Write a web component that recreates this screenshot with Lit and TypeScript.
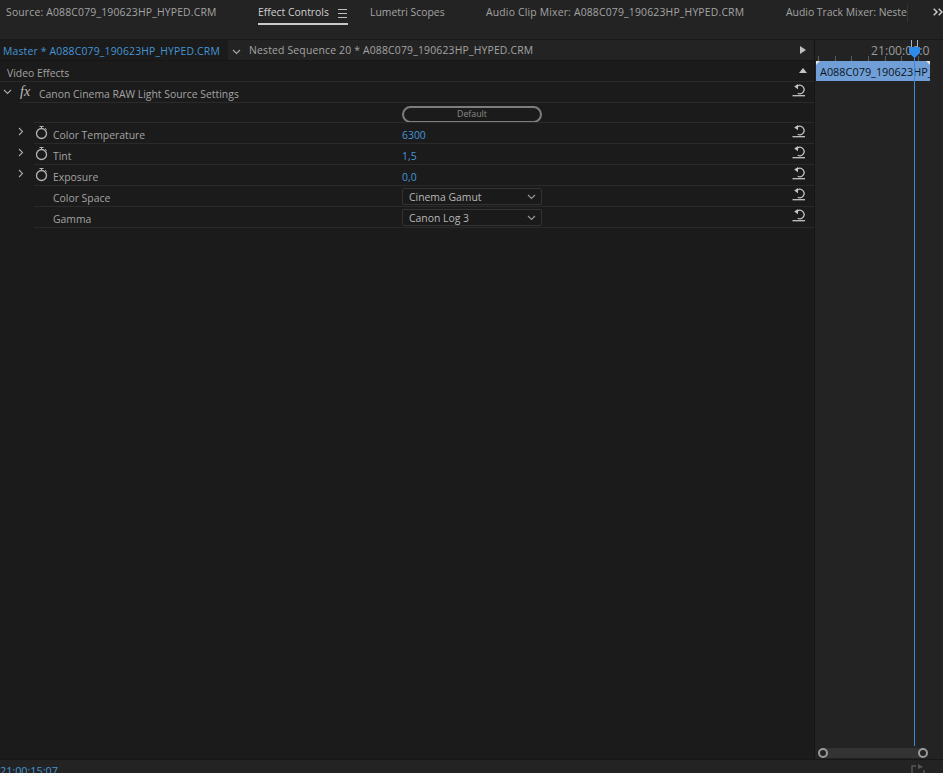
import { LitElement, html, css, svg } from "lit";
import { customElement } from "lit/decorators.js";

const chev = (d: string) => svg`<svg class="chev" width="9" height="9" viewBox="0 0 9 9" fill="none" stroke="currentColor" stroke-width="1.1"><path d="${d}"/></svg>`;
const right = chev("M3 1 L6.5 4.5 L3 8");
const down = chev("M1 3 L4.5 6.5 L8 3");
const stopwatch = html`<svg class="watch" width="13" height="15" viewBox="0 0 13 15" fill="none" stroke="#b4b4b4"><circle cx="6.5" cy="8.5" r="5" stroke-width="1.3"/><path d="M4.5 1.5 H8.5 M6.5 1.5 V3.5 M10.2 3.2 L11.6 4.6" stroke-width="1"/></svg>`;
const reset = html`<svg class="reset" width="14" height="13" viewBox="0 0 14 13" fill="none" stroke="#c4c4c4"><path d="M5.4 1.9 A4.3 4.3 0 1 1 5.7 9.3" stroke-width="1.3"/><path d="M6 0 L2.2 2.6 L6 5.2 Z" fill="#c4c4c4" stroke="none"/><path d="M0.5 11.7 H13" stroke-width="1.3"/></svg>`;

@customElement("app-root")
export class AppRoot extends LitElement {
  static styles = css`
    :host { display: block; width: 943px; height: 773px; overflow: hidden; background: #232323; font-family: "Open Sans", "Noto Sans", sans-serif; font-size: 10.4px; color: #a3a3a3; position: relative; }
    .tabs { height: 39px; display: flex; border-bottom: 1px solid #191919; position: relative; }
    .tab { position: absolute; top: 5px; white-space: nowrap; line-height: 15px; }
    .wide { letter-spacing: 0.18px; }
    .tab.active { color: #d0d0d0; left: 258px; width: 90px; height: 18px; border-bottom: 2px solid #c8c8c8; display: flex; justify-content: space-between; }
    .burger { width: 9px; height: 7px; margin: 4px 1px 0 0; border-top: 1px solid #c0c0c0; border-bottom: 1px solid #c0c0c0; position: relative; }
    .burger::after { content: ""; position: absolute; left: 0; right: 0; top: 3px; height: 1px; background: #c0c0c0; }
    .sep { position: absolute; left: 907px; top: 4px; width: 1px; height: 18px; background: #333; }
    .more { position: absolute; left: 933px; top: 8px; }
    .main { display: flex; height: 719px; }
    .left { width: 815px; flex: none; background: #1b1b1b; border-right: 1px solid #141414; box-sizing: border-box; display: flex; flex-direction: column; }
    .seq { height: 21px; flex: none; display: flex; align-items: center; background: #232323; border-bottom: 1px solid #161616; box-sizing: border-box; position: relative; }
    .seq .master { width: 228px; height: 20px; line-height: 22px; background: #1b1b1b; color: #4496d6; padding-left: 3px; box-sizing: border-box; white-space: nowrap; }
    .seq .chev { margin: 2px 0 0 4px; color: #a8a8a8; }
    .seq .name { margin-left: 8px; white-space: nowrap; line-height: 22px; }
    .seq .play { position: absolute; left: 800px; top: 6px; width: 0; height: 0; border-left: 6px solid #c0c0c0; border-top: 4px solid transparent; border-bottom: 4px solid transparent; }
    .ve { height: 21px; flex: none; box-sizing: border-box; display: flex; align-items: center; justify-content: space-between; padding: 3px 7px 0; border-bottom: 1px solid #2a2a2a; }
    .up { width: 0; height: 0; border-bottom: 5px solid #c4c4c4; border-left: 4.5px solid transparent; border-right: 4.5px solid transparent; margin: -4px 0 0; }
    .row { height: 21px; flex: none; box-sizing: border-box; padding-top: 2px; display: grid; grid-template-columns: 35px 18px 349px 1fr 22px; align-items: center; position: relative; }
    .row::after { content: ""; position: absolute; left: 34px; right: 0; bottom: 0; height: 1px; background: #2a2a2a; }
    .row.short { height: 20px; }
    .row.fxrow::after { left: 20px; }
    .row .tw { display: flex; justify-content: flex-end; padding-right: 10px; color: #a8a8a8; margin-top: -6px; }
    .row .w { display: flex; margin-top: -5px; }
    .row .ctl { display: flex; }
    .row .sctl { display: flex; margin-top: -2px; }
    .row .rs { display: flex; margin-top: -7px; }
    .val { color: #4496d6; }
    .lbl { white-space: nowrap; }
    .fxrow { grid-template-columns: 20px 19px 1fr 22px; }
    .fxrow .tw { justify-content: flex-start; padding-left: 3px; padding-right: 0; margin-top: -5px; }
    .fxlabel { font-family: "Liberation Serif", serif; font-style: italic; font-size: 14px; color: #bdbdbd; margin-top: -3px; }
    .btn { width: 140px; height: 17px; box-sizing: border-box; border: 2px solid #7d7d7d; border-radius: 9px; text-align: center; font-size: 8.8px; line-height: 13px; color: #8c8c8c; }
    .sel { width: 140px; height: 17px; box-sizing: border-box; border: 1px solid #333; border-radius: 2px; background: #1a1a1a; color: #b8b8b8; display: flex; align-items: center; justify-content: space-between; padding: 0 5px 0 6px; }
    .sel .chev { color: #999; }
    .spacer { flex: 1; }
    .right { width: 128px; flex: none; position: relative; display: flex; flex-direction: column; }
    .ruler { height: 21px; flex: none; position: relative; overflow: hidden; }
    .time { position: absolute; left: 56px; top: 2px; width: 59px; overflow: hidden; font-size: 12.2px; color: #9a9a9a; white-space: nowrap; }
    .ticks { position: absolute; left: 3px; right: 14px; bottom: 0; height: 5px; background: repeating-linear-gradient(90deg, #5c5c5c 0 1px, transparent 1px 16.7px); }
    .clip { width: 114px; height: 20px; flex: none; margin-left: 1px; background: #6f9fd6; color: #10151c; position: relative; font-size: 10.9px; line-height: 22px; padding-left: 4px; box-sizing: border-box; white-space: nowrap; overflow: hidden; }
    .clip::before, .clip::after { content: ""; position: absolute; top: 0; border-top: 4px solid #e4e4e4; }
    .clip::before { left: 0; border-right: 4px solid transparent; }
    .clip::after { right: 0; border-left: 4px solid transparent; }
    .track { flex: 1; }
    .scroll { height: 10px; flex: none; margin: 0 20px 1px 8px; background: #333; position: relative; }
    .knob { position: absolute; top: 0; width: 10px; height: 10px; box-sizing: border-box; border: 2px solid #9a9a9a; border-radius: 50%; background: #232323; }
    .knob.a { left: -5px; }
    .knob.b { right: -5px; }
    .playhead { position: absolute; left: 99px; top: 8px; bottom: 13px; width: 1px; background: #3c8ad4; }
    .head { position: absolute; left: 94px; top: 7px; width: 11px; height: 11px; background: #2d8ceb; clip-path: polygon(0 0, 100% 0, 100% 55%, 50% 100%, 0 55%); }
    .ears { position: absolute; left: 96px; top: 0; width: 5px; height: 7px; border: 1px solid #9fb6cf; border-top: 0; }
    .foot { height: 14px; border-top: 1px solid #171717; position: relative; box-sizing: border-box; }
    .tc { position: absolute; left: 0; top: 3px; color: #4496d6; white-space: nowrap; font-size: 10.8px; }
    .exp { position: absolute; left: 911px; top: 4px; }
  `;

  private row(label: string, ctl: unknown, watch = true, cls = "ctl") {
    return html`<div class="row">
      <div class="tw">${watch ? right : ""}</div>
      <div class="w">${watch ? stopwatch : ""}</div>
      <div class="lbl">${label}</div>
      <div class=${cls}>${ctl}</div>
      <div class="rs">${reset}</div>
    </div>`;
  }

  render() {
    return html`
      <div class="tabs">
        <span class="tab wide" style="left:6px">Source: A088C079_190623HP_HYPED.CRM</span>
        <span class="tab active">Effect Controls<span class="burger"></span></span>
        <span class="tab" style="left:370px">Lumetri Scopes</span>
        <span class="tab wide" style="left:486px">Audio Clip Mixer: A088C079_190623HP_HYPED.CRM</span>
        <span class="tab" style="left:786px">Audio Track Mixer: Neste</span>
        <span class="sep"></span>
        <svg class="more" width="10" height="8" viewBox="0 0 10 8" fill="none" stroke="#c8c8c8" stroke-width="1.5"><path d="M0.7 0.7 L4 4 L0.7 7.3 M5.7 0.7 L9 4 L5.7 7.3"/></svg>
      </div>
      <div class="main">
        <div class="left">
          <div class="seq">
            <div class="master wide">Master * A088C079_190623HP_HYPED.CRM</div>
            ${down}
            <div class="name wide">Nested Sequence 20 * A088C079_190623HP_HYPED.CRM</div>
            <span class="play"></span>
          </div>
          <div class="ve"><span>Video Effects</span><span class="up"></span></div>
          <div class="row fxrow">
            <div class="tw">${down}</div>
            <div class="fxlabel">fx</div>
            <div class="lbl">Canon Cinema RAW Light Source Settings</div>
            <div class="rs">${reset}</div>
          </div>
          <div class="row short">
            <div></div><div></div><div></div>
            <div class="ctl"><div class="btn">Default</div></div>
            <div></div>
          </div>
          ${this.row("Color Temperature", html`<span class="val">6300</span>`)}
          ${this.row("Tint", html`<span class="val">1,5</span>`)}
          ${this.row("Exposure", html`<span class="val">0,0</span>`)}
          ${this.row("Color Space", html`<div class="sel">Cinema Gamut ${down}</div>`, false, "sctl")}
          ${this.row("Gamma", html`<div class="sel">Canon Log 3 ${down}</div>`, false, "sctl")}
          <div class="spacer"></div>
        </div>
        <div class="right">
          <div class="ruler"><span class="time">21:00:00:00</span><div class="ticks"></div></div>
          <div class="clip">A088C079_190623HP_HYPED.CRM</div>
          <div class="track"></div>
          <div class="scroll"><span class="knob a"></span><span class="knob b"></span></div>
          <span class="playhead"></span>
          <span class="ears"></span>
          <span class="head"></span>
        </div>
      </div>
      <div class="foot">
        <span class="tc">21:00:15:07</span>
        <svg class="exp" width="14" height="10" viewBox="0 0 14 10" fill="none" stroke="#555" stroke-width="1.5"><path d="M1 10 V2 H5 M13 10 V6"/><path d="M7 0 L12 3 L7 5 Z" fill="#555" stroke="none"/></svg>
      </div>
    `;
  }
}
